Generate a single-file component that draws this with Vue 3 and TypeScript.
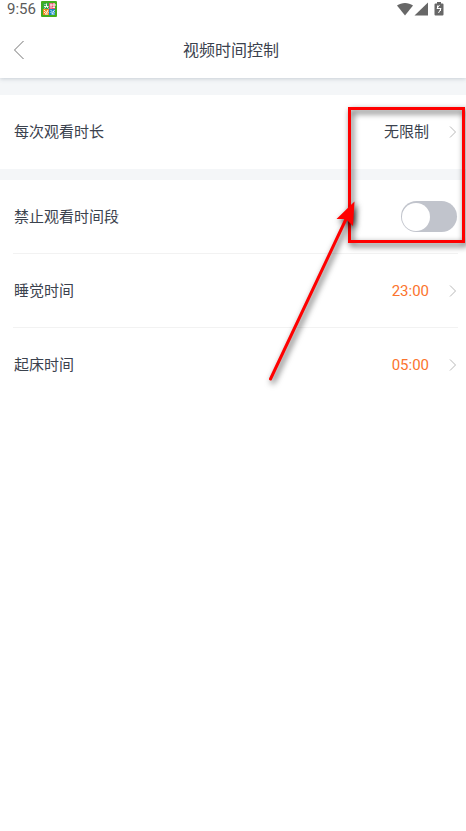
<script setup lang="ts">
import { ref } from 'vue'

interface TimeRow {
  id: string
  label: string
  value: string
}

const duration = ref('无限制')
const blocked = ref(false)
const times = ref<TimeRow[]>([
  { id: 'sleep', label: '睡觉时间', value: '23:00' },
  { id: 'wake', label: '起床时间', value: '05:00' },
])
</script>

<template>
  <div class="screen">
    <div class="status">
      <span class="clock">9:56</span>
      <svg class="app-badge" width="16" height="16" viewBox="0 0 16 16" aria-hidden="true">
        <rect width="16" height="16" rx="1" fill="#43ad1c" />
        <rect x="2" y="2" width="6" height="6" fill="#35a845" />
        <rect x="8" y="2" width="6" height="6" fill="#e8506c" />
        <rect x="2" y="8" width="6" height="6" fill="#f08a24" />
        <rect x="8" y="8" width="6" height="6" fill="#1388c4" />
        <g fill="none" stroke="#fff" stroke-width="1" opacity="0.9">
          <path d="M3.500 3l1 1M3 5.500h4.500M5.500 2.500v2.500L3.500 7.500M6 6l1.500 1.500" />
          <path d="M9 4h2M10 2.500v5M12 3h2v2h-2zM11.500 6.500h2.500" />
          <path d="M3 9l1.500 1.500L3 12M7 9L4.500 13M6 10.500l1.500 1M4 13h3" />
          <path d="M9.500 9l1.500 1.500L9.500 12M13.500 9L11 13M12.500 10.500l1 1M10.500 13h3" />
        </g>
      </svg>
      <svg class="signals" width="48" height="16" viewBox="0 0 48 16" aria-hidden="true">
        <g fill="#676767">
          <path d="M0 4.500C4.500 1 11.500 1 16 4.500L8 14.500z" />
          <path d="M31 1.500v13H17.500z" />
          <path d="M40 2.500V1h4v1.500h1.500q1 0 1 1V13.500q0 1-1 1h-7q-1 0-1-1V3.500q0-1 1-1z" />
        </g>
        <path d="M42.500 4L40 7.500h4L41.500 12M40.500 4.500v3M43.500 7.500v2.500" fill="none" stroke="#fff" stroke-width="1" />
      </svg>
    </div>

    <header class="header">
      <button class="back" type="button" aria-label="返回">
        <svg width="12" height="20" viewBox="0 0 12 20" aria-hidden="true">
          <path d="M10.500 1L1.500 10l9 9" fill="none" stroke="#747474" stroke-width="1" />
        </svg>
      </button>
      <h1 class="title">视频时间控制</h1>
    </header>

    <main>
      <section class="group">
        <button class="row" type="button">
          <span>每次观看时长</span>
          <span class="value">{{ duration }}</span>
          <svg class="chevron" width="8" height="14" viewBox="0 0 8 14" aria-hidden="true">
            <path d="M1 1.500L6.500 7 1 12.500" />
          </svg>
        </button>
      </section>

      <section class="group">
        <div class="row">
          <label for="blocked">禁止观看时间段</label>
          <input id="blocked" v-model="blocked" class="switch" type="checkbox" role="switch" />
        </div>
        <button v-for="item in times" :key="item.id" class="row" type="button">
          <span>{{ item.label }}</span>
          <span class="value time">{{ item.value }}</span>
          <svg class="chevron" width="8" height="14" viewBox="0 0 8 14" aria-hidden="true">
            <path d="M1 1.500L6.500 7 1 12.500" />
          </svg>
        </button>
      </section>
    </main>

    <svg class="callout" width="206" height="300" viewBox="260 100 206 300" aria-hidden="true">
      <g class="shadowed">
        <rect x="349.500" y="108.500" width="114" height="133" fill="none" stroke="#f00" stroke-width="3" />
      </g>
      <g class="shadowed">
        <path d="M270.500 379L347 217" fill="none" stroke="#f00" stroke-width="3" stroke-linecap="round" />
        <path d="M354.500 201.500L353 226l-7-7-9.500 0z" fill="#f00" />
      </g>
    </svg>
  </div>
</template>

<style>
body {
  margin: 0;
  background: #fff;
}
</style>

<style scoped>
.screen {
  position: relative;
  min-height: 100vh;
  overflow: hidden;
  background: #fff;
  color: #3b424e;
  font-family: Roboto, "Noto Sans CJK SC", sans-serif;
  font-size: 15px;
}

.status {
  position: relative;
  z-index: 1;
  display: flex;
  align-items: center;
  height: 18px;
  padding: 0 21px 0 7px;
  background: #fff;
}

.clock {
  color: #5a5a5a;
  font-size: 15px;
  line-height: 18px;
}

.app-badge {
  margin-left: 5px;
}

.signals {
  margin-left: auto;
}

.header {
  position: relative;
  display: grid;
  grid-template-columns: 40px 1fr 40px;
  align-items: center;
  height: 56px;
  padding: 4px 4px 0 0;
  background: #fff;
  box-shadow: 0 1px 4px rgba(70, 90, 110, 0.25);
}

.back {
  display: flex;
  align-items: center;
  height: 40px;
  padding: 0 0 0 13px;
  border: 0;
  background: none;
}

.title {
  margin: 0;
  padding-top: 2px;
  font-size: 16px;
  font-weight: 400;
  line-height: 24px;
  text-align: center;
}

main {
  display: flex;
  flex-direction: column;
  gap: 11px;
  padding-top: 17px;
  background: #f4f6f8;
}

.group {
  display: flex;
  flex-direction: column;
  background: #fff;
}

.row {
  position: relative;
  box-sizing: border-box;
  display: flex;
  align-items: center;
  height: 74px;
  padding: 0 9px 1px 14px;
  border: 0;
  background: none;
  color: inherit;
  font: inherit;
  line-height: 22px;
  text-align: left;
}

.row:not(:last-child)::after {
  content: "";
  position: absolute;
  right: 8px;
  bottom: 0;
  left: 13px;
  height: 1px;
  background: #f2f2f2;
}

.value {
  margin-left: auto;
}

.time {
  color: #fb742d;
}

.chevron {
  margin-left: 20px;
  fill: none;
  stroke: #b9b9b9;
}

.switch {
  appearance: none;
  width: 56px;
  height: 31px;
  margin: 0 0 0 auto;
  border-radius: 16px;
  background: #c1c4cc;
}

.switch::before {
  content: "";
  display: block;
  width: 28px;
  height: 28px;
  margin: 2px 1px 1px;
  border-radius: 50%;
  background: #fff;
}

.switch:checked {
  background: #fb742d;
}

.switch:checked::before {
  margin-left: 27px;
}

.callout {
  position: absolute;
  top: 100px;
  right: 0;
  pointer-events: none;
}

.shadowed {
  filter: drop-shadow(2px 3px 3px rgba(0, 0, 0, 0.75));
}
</style>
